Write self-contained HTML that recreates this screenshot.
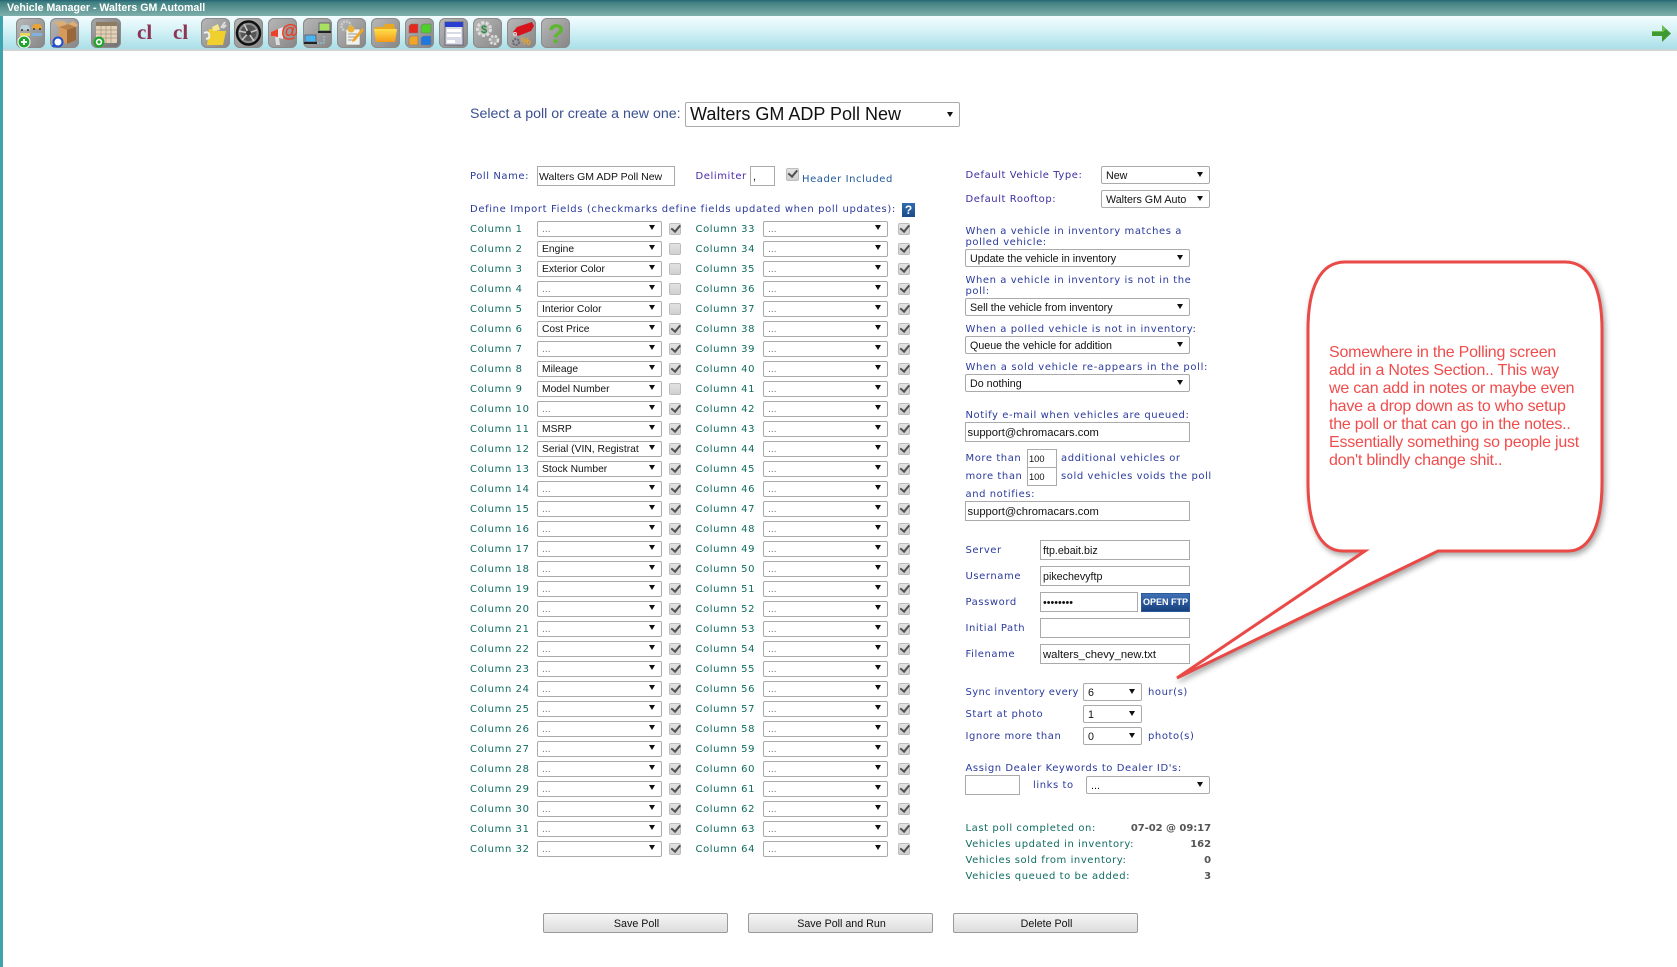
<!DOCTYPE html>
<html lang="en"><head><meta charset="utf-8"><title>Vehicle Manager - Walters GM Automall</title>
<style>
*{box-sizing:border-box}
html,body{margin:0;padding:0}
body{width:1677px;height:967px;position:relative;overflow:hidden;background:#fff;font-family:"Liberation Sans",sans-serif}
#edge{position:absolute;left:0;top:16px;width:3px;height:951px;background:#3fa3ad}
#title{position:absolute;left:0;top:0;width:1677px;height:16px;background:linear-gradient(#2a6a78 0,#2a6a78 1px,#3f7f7f 2px,#7fb0ac 100%)}
#title span{position:absolute;left:7px;top:2px;font:bold 10.6px/13px "Liberation Sans",sans-serif;letter-spacing:0;color:#fff}
#bar{position:absolute;left:3px;top:16px;width:1674px;height:35px;background:linear-gradient(#f4fdff,#d8f3f7 40%,#a9dfe8);border-bottom:2px solid #cfd4d6}
.ic{position:absolute;top:18px;width:29px;height:30px;border-radius:6px;background:linear-gradient(135deg,#b8b8b8,#858585);box-shadow:inset 0 0 0 1px #8b8b8b}
.cl{position:absolute;top:19px;font:bold 21px/26px "Liberation Serif",serif;color:#8b3454}
.l{position:absolute;white-space:nowrap;font:10px/12px "DejaVu Sans",sans-serif;letter-spacing:.57px;color:#2a3a9c;margin-top:1px}
.g{color:#116b60}
.v{position:absolute;white-space:nowrap;font:bold 10px/12px "DejaVu Sans",sans-serif;letter-spacing:-.05px;color:#555;text-align:right;right:466px;margin-top:1px}
.s{position:absolute;display:block;height:18px;border:1px solid #aaa;border-radius:2px;background:#fff;font:10.7px/18px "Liberation Sans",sans-serif;color:#111;padding-left:4px;overflow:hidden;white-space:nowrap}
.s::after{content:"";position:absolute;right:6px;top:5px;border-left:3.5px solid transparent;border-right:3.5px solid transparent;border-top:5.5px solid #111}
.s.big::after{top:8.5px}
.s em{font-style:normal;display:block;overflow:hidden}
.t{position:absolute;display:block;height:20px;border:1px solid #aaa;background:#fff;font:10.7px/18px "Liberation Sans",sans-serif;color:#111;padding:2px 0 0 2px;white-space:nowrap;overflow:hidden}
.r{position:absolute;left:0;width:1000px;height:16px}
.r b{position:absolute;left:470px;top:3px;font:10px/12px "DejaVu Sans",sans-serif;letter-spacing:.6px;color:#116b60;white-space:nowrap}
.r b.n{left:695.5px}
.r i{position:absolute;left:537px;top:0;width:125px;height:16px;border:1px solid #aaa;border-radius:2px;font:10.3px/15px "Liberation Sans",sans-serif;color:#111;padding-left:4px;overflow:hidden;white-space:nowrap}
.r i.n{left:763px}
.r i::after{content:"";position:absolute;right:6px;top:3px;border-left:3.5px solid transparent;border-right:3.5px solid transparent;border-top:5.5px solid #111;background:none}
.r i.d{color:#777}
.r u{position:absolute;left:669px;top:1.5px;width:12px;height:12px;border:1px solid #bdbdbd;border-radius:2px;background:linear-gradient(#e2e2e2,#d0d0d0);text-decoration:none}
.r u.n{left:898px}
.r u::after,.ck::after{content:"";position:absolute;left:3px;top:-1px;width:3.5px;height:6.5px;border-right:2px solid #505050;border-bottom:2px solid #505050;transform:rotate(40deg)}
.r u.e::after{display:none}
.ck{position:absolute;left:786px;top:168px;width:13px;height:13px;border:1px solid #bdbdbd;border-radius:2px;background:linear-gradient(#e2e2e2,#d0d0d0)}
.btn{position:absolute;top:913px;width:185px;height:20px;border:1px solid #9a9a9a;border-radius:2px;background:linear-gradient(#f6f6f6,#dcdcdc);font:10.7px/20px "Liberation Sans",sans-serif;color:#111;text-align:center;padding-left:2px}
#ftp{position:absolute;left:1141px;top:593px;width:49px;height:19px;background:linear-gradient(#3f6fb5,#17407f);border:1px solid #2a5a9a;color:#fff;font:bold 9px/17px "Liberation Sans",sans-serif;letter-spacing:0;text-align:center;white-space:nowrap;overflow:hidden}
#help{position:absolute;left:902px;top:203px;width:13px;height:14px;background:linear-gradient(#2f6bb0,#1c4b88);color:#fff;font:bold 12px/14px "Liberation Sans",sans-serif;text-align:center}
#callout{position:absolute;left:0;top:0;width:1677px;height:967px;pointer-events:none}
#note{position:absolute;left:1329px;top:344px;font:16px/18px "Liberation Sans",sans-serif;color:#f04c4c;letter-spacing:-.22px;white-space:nowrap}
</style></head><body>
<div id="edge"></div>
<div id="title"><span>Vehicle Manager - Walters GM Automall</span></div>
<div id="bar"></div>

<svg class="ic" style="left:16px" viewBox="0 0 29 30"><g stroke="none"><path d="M4 10l2-3h6l2 3v2H4z" fill="#bcd3dc"/><path d="M16 9l2-3h6l2 3v2H16z" fill="#e8a33a"/><rect x="4" y="15" width="10" height="3" fill="#e8d65a"/><rect x="16" y="15" width="10" height="3" fill="#7fb2de"/><circle cx="6" cy="12" r="1" fill="#333"/><circle cx="12" cy="12" r="1" fill="#333"/><circle cx="18" cy="11" r="1" fill="#333"/><circle cx="24" cy="11" r="1" fill="#333"/><circle cx="8" cy="24" r="6" fill="#1ea52c" stroke="#fff"/><path d="M5 24h6M8 21v6" stroke="#fff" stroke-width="2"/></g></svg>
<svg class="ic" style="left:49.5px" viewBox="0 0 29 30"><path d="M9 9l9-3 8 3v13l-9 4-8-4z" fill="#b8804a"/><path d="M9 9l8 3v14l-8-4z" fill="#d59a5c"/><path d="M17 12l9-3v13l-9 4z" fill="#9a673a"/><path d="M9 9L4 4l9-1 5 3zM18 6l5-3 5 4-2 2z" fill="#dcae74"/><circle cx="8" cy="24" r="4.5" fill="#fff" stroke="#1c4fd0" stroke-width="2"/><path d="M5 27l-3 2" stroke="#1c4fd0" stroke-width="2.5"/></svg>
<svg class="ic" style="left:91px;width:30px;background:linear-gradient(135deg,#a8a8a8,#6e6e6e)" viewBox="0 0 30 30"><rect x="5" y="4" width="21" height="21" rx="1" fill="#e2d2b8"/><rect x="5" y="4" width="21" height="4" fill="#8f7a62"/><path d="M5 12h21M5 16h21M5 20h21M10 8v17M15 8v17M20 8v17" stroke="#a8957c" stroke-width=".7"/><circle cx="8" cy="24" r="5.5" fill="#22a52e"/><circle cx="8" cy="24" r="2.4" fill="none" stroke="#fff" stroke-width="1.6"/></svg>
<span class="cl" style="left:137px">cl</span>
<span class="cl" style="left:173px">cl</span>
<svg class="ic" style="left:201px" viewBox="0 0 29 30"><path d="M8 11h6l2 2h9l-3 14H6z" fill="#f0d02c"/><path d="M11 9l6-3 2 6-7 1z" fill="#f6e88a"/><path d="M20 10l4-6M22 10l3-3" stroke="#ddd" stroke-width="2"/><path d="M3 15c4-2 6 0 5 5l-3 1" fill="none" stroke="#eee" stroke-width="2"/></svg>
<svg class="ic" style="left:234px" viewBox="0 0 29 30"><circle cx="14.5" cy="15" r="11.5" fill="#8a8a8a" stroke="#111" stroke-width="2.500"/><circle cx="14.5" cy="15" r="8" fill="#555"/><path d="M14.5 15L10 6M14.5 15L23 12M14.5 15L20 23M14.5 15L8 22M14.5 15L5 13" stroke="#c8c8c8" stroke-width="1.6"/><circle cx="14.5" cy="15" r="2.5" fill="#333"/></svg>
<svg class="ic" style="left:268px" viewBox="0 0 29 30"><path d="M3 14l12-5v12L3 18z" fill="#e8e8e8"/><path d="M3 14l7-3v8l-7-1z" fill="#e8412c"/><path d="M7 19l4 1 1 7H8z" fill="#ddd"/><text x="13" y="19" font-family="Liberation Sans,sans-serif" font-size="18" font-weight="bold" fill="#ee3a22">@</text></svg>
<svg class="ic" style="left:303px" viewBox="0 0 29 30"><rect x="16" y="5" width="11" height="8" fill="#a8e060" stroke="#667"/><rect x="15" y="13" width="13" height="2" fill="#222"/><rect x="2" y="17" width="11" height="7" fill="#4ab4f0" stroke="#667"/><rect x="1" y="24" width="13" height="2" fill="#222"/><path d="M14 25h7v-8" fill="none" stroke="#8fd0ef" stroke-width="1" stroke-dasharray="2 1"/></svg>
<svg class="ic" style="left:337px" viewBox="0 0 29 30"><circle cx="9" cy="8" r="4.5" fill="none" stroke="#ccc" stroke-width="2.5" stroke-dasharray="2 1"/><rect x="9" y="11" width="14" height="16" fill="#f2f2ec" stroke="#888" stroke-width=".6"/><path d="M11 16h9M11 19h9M11 22h7" stroke="#999"/><circle cx="14" cy="11" r="3.5" fill="#e8b23a"/><path d="M16 21l9-11 2 2-9 11-3 1z" fill="#f0a428"/></svg>
<svg class="ic" style="left:371px" viewBox="0 0 29 30"><defs><linearGradient id="fd" x1="0" y1="0" x2="0" y2="1"><stop offset="0" stop-color="#ffe04a"/><stop offset="1" stop-color="#f59a18"/></linearGradient></defs><path d="M4 9h8l2-3h9l1 5H4z" fill="#e8a824"/><path d="M3 11h23l-2 13H5z" fill="url(#fd)"/></svg>
<svg class="ic" style="left:405px" viewBox="0 0 29 30"><g stroke="#777" stroke-width=".6"><path d="M4 8l2-2h7v9H4z" fill="#e6281e"/><path d="M16 8l2-2h8v9H16z" fill="#4ecf2a"/><path d="M4 20l2-2h7v9H4z" fill="#f0a428"/><path d="M16 20l2-2h8v9H16z" fill="#1e78e0"/></g></svg>
<svg class="ic" style="left:439px" viewBox="0 0 29 30"><rect x="6" y="4" width="18" height="23" fill="#d8dbe6" stroke="#667"/><rect x="6" y="4" width="18" height="5" fill="#2a3fd0"/><rect x="8" y="11" width="14" height="3" fill="#fff"/><rect x="8" y="16" width="14" height="3" fill="#fff"/><rect x="8" y="22" width="8" height="3" fill="#fff"/></svg>
<svg class="ic" style="left:473px" viewBox="0 0 29 30"><circle cx="11" cy="11" r="6.5" fill="#bbb" stroke="#ddd" stroke-width="3" stroke-dasharray="3 1.6"/><text x="8" y="15" font-family="Liberation Sans,sans-serif" font-size="11" font-weight="bold" fill="#2a8a3a">$</text><circle cx="21" cy="22" r="4" fill="#aaa" stroke="#ddd" stroke-width="2.5" stroke-dasharray="2.5 1.4"/></svg>
<svg class="ic" style="left:507px" viewBox="0 0 29 30"><path d="M6 14l4-5 15-5 2 4-3 5-13 5z" fill="#d6141e"/><circle cx="8" cy="16" r="1.5" fill="none" stroke="#ddd"/><text x="14" y="27" font-family="Liberation Sans,sans-serif" font-size="11" font-weight="bold" fill="#f0a428">%</text><circle cx="9" cy="24" r="3" fill="none" stroke="#667" stroke-width="2" stroke-dasharray="2 1"/></svg>
<svg class="ic" style="left:541px" viewBox="0 0 29 30"><text x="7" y="25" font-family="Liberation Sans,sans-serif" font-size="27" font-weight="bold" fill="#5cb82a">?</text></svg>
<svg style="position:absolute;left:1651px;top:24px" width="21" height="19" viewBox="0 0 21 19"><path d="M1 7h10V1l9 8.500-9 8.500v-6H1z" fill="#3f9a32"/><path d="M1 7h10V1l4 4-3 3H1z" fill="#6cc052"/></svg>

<span class="l" style="left:470px;top:104px;font:14.2px/18px 'Liberation Sans',sans-serif;letter-spacing:0;color:#3a5090">Select a poll or create a new one:</span>
<span class="s big" style="left:685px;top:102px;width:275px;height:25px;font:18px/22px 'Liberation Sans',sans-serif;padding-left:4px">Walters GM ADP Poll New</span>

<span class="l" style="left:470px;top:169.500px">Poll Name:</span>
<input class="t" style="left:537px;top:166px;width:138px;font-size:10.5px;padding-left:1px" value="Walters GM ADP Poll New">
<span class="l" style="left:695.500px;top:169.500px;color:#4a2ab0">Delimiter</span>
<input class="t" style="left:750px;top:166px;width:25px" value=",">
<span class="ck"></span>
<span class="l" style="left:802px;top:172.500px;color:#1f5a9c">Header Included</span>
<span class="l" style="left:470px;top:202.500px;letter-spacing:.63px">Define Import Fields (checkmarks define fields updated when poll updates):</span>
<div id="help">?</div>

<div class="r" style="top:221px"><b>Column 1</b><i class="d">...</i><u></u><b class="n">Column 33</b><i class="n d">...</i><u class="n"></u></div>
<div class="r" style="top:241px"><b>Column 2</b><i>Engine</i><u class="e"></u><b class="n">Column 34</b><i class="n d">...</i><u class="n"></u></div>
<div class="r" style="top:261px"><b>Column 3</b><i>Exterior Color</i><u class="e"></u><b class="n">Column 35</b><i class="n d">...</i><u class="n"></u></div>
<div class="r" style="top:281px"><b>Column 4</b><i class="d">...</i><u class="e"></u><b class="n">Column 36</b><i class="n d">...</i><u class="n"></u></div>
<div class="r" style="top:301px"><b>Column 5</b><i>Interior Color</i><u class="e"></u><b class="n">Column 37</b><i class="n d">...</i><u class="n"></u></div>
<div class="r" style="top:321px"><b>Column 6</b><i>Cost Price</i><u></u><b class="n">Column 38</b><i class="n d">...</i><u class="n"></u></div>
<div class="r" style="top:341px"><b>Column 7</b><i class="d">...</i><u></u><b class="n">Column 39</b><i class="n d">...</i><u class="n"></u></div>
<div class="r" style="top:361px"><b>Column 8</b><i>Mileage</i><u></u><b class="n">Column 40</b><i class="n d">...</i><u class="n"></u></div>
<div class="r" style="top:381px"><b>Column 9</b><i>Model Number</i><u class="e"></u><b class="n">Column 41</b><i class="n d">...</i><u class="n"></u></div>
<div class="r" style="top:401px"><b>Column 10</b><i class="d">...</i><u></u><b class="n">Column 42</b><i class="n d">...</i><u class="n"></u></div>
<div class="r" style="top:421px"><b>Column 11</b><i>MSRP</i><u></u><b class="n">Column 43</b><i class="n d">...</i><u class="n"></u></div>
<div class="r" style="top:441px"><b>Column 12</b><i>Serial (VIN, Registrat</i><u></u><b class="n">Column 44</b><i class="n d">...</i><u class="n"></u></div>
<div class="r" style="top:461px"><b>Column 13</b><i>Stock Number</i><u></u><b class="n">Column 45</b><i class="n d">...</i><u class="n"></u></div>
<div class="r" style="top:481px"><b>Column 14</b><i class="d">...</i><u></u><b class="n">Column 46</b><i class="n d">...</i><u class="n"></u></div>
<div class="r" style="top:501px"><b>Column 15</b><i class="d">...</i><u></u><b class="n">Column 47</b><i class="n d">...</i><u class="n"></u></div>
<div class="r" style="top:521px"><b>Column 16</b><i class="d">...</i><u></u><b class="n">Column 48</b><i class="n d">...</i><u class="n"></u></div>
<div class="r" style="top:541px"><b>Column 17</b><i class="d">...</i><u></u><b class="n">Column 49</b><i class="n d">...</i><u class="n"></u></div>
<div class="r" style="top:561px"><b>Column 18</b><i class="d">...</i><u></u><b class="n">Column 50</b><i class="n d">...</i><u class="n"></u></div>
<div class="r" style="top:581px"><b>Column 19</b><i class="d">...</i><u></u><b class="n">Column 51</b><i class="n d">...</i><u class="n"></u></div>
<div class="r" style="top:601px"><b>Column 20</b><i class="d">...</i><u></u><b class="n">Column 52</b><i class="n d">...</i><u class="n"></u></div>
<div class="r" style="top:621px"><b>Column 21</b><i class="d">...</i><u></u><b class="n">Column 53</b><i class="n d">...</i><u class="n"></u></div>
<div class="r" style="top:641px"><b>Column 22</b><i class="d">...</i><u></u><b class="n">Column 54</b><i class="n d">...</i><u class="n"></u></div>
<div class="r" style="top:661px"><b>Column 23</b><i class="d">...</i><u></u><b class="n">Column 55</b><i class="n d">...</i><u class="n"></u></div>
<div class="r" style="top:681px"><b>Column 24</b><i class="d">...</i><u></u><b class="n">Column 56</b><i class="n d">...</i><u class="n"></u></div>
<div class="r" style="top:701px"><b>Column 25</b><i class="d">...</i><u></u><b class="n">Column 57</b><i class="n d">...</i><u class="n"></u></div>
<div class="r" style="top:721px"><b>Column 26</b><i class="d">...</i><u></u><b class="n">Column 58</b><i class="n d">...</i><u class="n"></u></div>
<div class="r" style="top:741px"><b>Column 27</b><i class="d">...</i><u></u><b class="n">Column 59</b><i class="n d">...</i><u class="n"></u></div>
<div class="r" style="top:761px"><b>Column 28</b><i class="d">...</i><u></u><b class="n">Column 60</b><i class="n d">...</i><u class="n"></u></div>
<div class="r" style="top:781px"><b>Column 29</b><i class="d">...</i><u></u><b class="n">Column 61</b><i class="n d">...</i><u class="n"></u></div>
<div class="r" style="top:801px"><b>Column 30</b><i class="d">...</i><u></u><b class="n">Column 62</b><i class="n d">...</i><u class="n"></u></div>
<div class="r" style="top:821px"><b>Column 31</b><i class="d">...</i><u></u><b class="n">Column 63</b><i class="n d">...</i><u class="n"></u></div>
<div class="r" style="top:841px"><b>Column 32</b><i class="d">...</i><u></u><b class="n">Column 64</b><i class="n d">...</i><u class="n"></u></div>

<span class="l" style="left:965.500px;top:169px;color:#3a2ea0">Default Vehicle Type:</span>
<span class="s" style="left:1101px;top:166px;width:109px">New</span>
<span class="l" style="left:965.500px;top:193px;color:#3a2ea0">Default Rooftop:</span>
<span class="s" style="left:1101px;top:190px;width:109px"><em style="width:80px">Walters GM Automall</em></span>
<span class="l" style="left:965.500px;top:224.500px">When a vehicle in inventory matches a</span>
<span class="l" style="left:965.500px;top:235.500px">polled vehicle:</span>
<span class="s" style="left:965px;top:249px;width:224.500px">Update the vehicle in inventory</span>
<span class="l" style="left:965.500px;top:273.500px">When a vehicle in inventory is not in the</span>
<span class="l" style="left:965.500px;top:285px">poll:</span>
<span class="s" style="left:965px;top:298px;width:224.500px">Sell the vehicle from inventory</span>
<span class="l" style="left:965.500px;top:322.500px">When a polled vehicle is not in inventory:</span>
<span class="s" style="left:965px;top:336px;width:224.500px">Queue the vehicle for addition</span>
<span class="l" style="left:965.500px;top:360.500px;letter-spacing:.66px">When a sold vehicle re-appears in the poll:</span>
<span class="s" style="left:965px;top:374px;width:224.500px">Do nothing</span>
<span class="l" style="left:965.500px;top:408.500px">Notify e-mail when vehicles are queued:</span>
<input class="t" style="left:965px;top:422px;width:224.500px;font-size:11.2px;padding-left:1.5px" value="support@chromacars.com">
<span class="l" style="left:965.500px;top:451.500px">More than</span>
<input class="t" style="left:1027px;top:449px;width:30px;height:19px;font-size:9.300px;padding:0 0 0 1px" value="100">
<span class="l" style="left:1061px;top:451.500px">additional vehicles or</span>
<span class="l" style="left:965.500px;top:469.500px">more than</span>
<input class="t" style="left:1027px;top:467px;width:30px;height:19px;font-size:9.300px;padding:0 0 0 1px" value="100">
<span class="l" style="left:1061px;top:469.500px">sold vehicles voids the poll</span>
<span class="l" style="left:965.500px;top:487.500px">and notifies:</span>
<input class="t" style="left:965px;top:501px;width:224.500px;font-size:11.2px;padding-left:1.5px" value="support@chromacars.com">

<span class="l" style="left:965.500px;top:543.500px">Server</span>
<input class="t" style="left:1040px;top:540px;width:150px" value="ftp.ebait.biz">
<span class="l" style="left:965.500px;top:569.500px">Username</span>
<input class="t" style="left:1040px;top:566px;width:150px" value="pikechevyftp">
<span class="l" style="left:965.500px;top:595.500px">Password</span>
<input class="t" style="left:1040px;top:592px;width:98px" value="••••••••">
<div id="ftp">OPEN FTP</div>
<span class="l" style="left:965.500px;top:621.500px">Initial Path</span>
<input class="t" style="left:1040px;top:618px;width:150px" value="">
<span class="l" style="left:965.500px;top:647.500px">Filename</span>
<input class="t" style="left:1040px;top:644px;width:150px;font-size:11.3px" value="walters_chevy_new.txt">

<span class="l" style="left:965.500px;top:685.500px;letter-spacing:.35px">Sync inventory every</span>
<span class="s" style="left:1083px;top:683px;width:59px">6</span>
<span class="l" style="left:1148px;top:685.500px">hour(s)</span>
<span class="l" style="left:965.500px;top:707.500px">Start at photo</span>
<span class="s" style="left:1083px;top:705px;width:59px">1</span>
<span class="l" style="left:965.500px;top:729.500px">Ignore more than</span>
<span class="s" style="left:1083px;top:727px;width:59px">0</span>
<span class="l" style="left:1148px;top:729.500px">photo(s)</span>
<span class="l" style="left:965.500px;top:761.500px">Assign Dealer Keywords to Dealer ID's:</span>
<input class="t" style="left:965px;top:775px;width:55px" value="">
<span class="l" style="left:1033px;top:778.500px">links to</span>
<span class="s" style="left:1086px;top:776px;width:124px">...</span>

<span class="l g" style="left:965.500px;top:821.500px">Last poll completed on:</span><span class="v" style="top:821.500px">07-02 @ 09:17</span>
<span class="l g" style="left:965.500px;top:837.500px">Vehicles updated in inventory:</span><span class="v" style="top:837.500px">162</span>
<span class="l g" style="left:965.500px;top:853.500px">Vehicles sold from inventory:</span><span class="v" style="top:853.500px">0</span>
<span class="l g" style="left:965.500px;top:869.500px">Vehicles queued to be added:</span><span class="v" style="top:869.500px">3</span>

<div class="btn" style="left:543px">Save Poll</div>
<div class="btn" style="left:748px">Save Poll and Run</div>
<div class="btn" style="left:953px">Delete Poll</div>

<svg id="callout" viewBox="0 0 1677 967"><path d="M1365 551L1177 678L1438 551H1568C1590 551 1602 525 1602 483V330C1602 288 1590 262 1565 262H1345C1320 262 1308 288 1308 330V483C1308 525 1320 551 1343 551Z" fill="#fff" stroke="#e94a47" stroke-width="3" style="filter:drop-shadow(2px 3px 3px rgba(0,0,0,.35))"/></svg>
<div id="note">Somewhere in the Polling screen<br>add in a Notes Section.. This way<br>we can add in notes or maybe even<br>have a drop down as to who setup<br>the poll or that can go in the notes..<br>Essentially something so people just<br>don't blindly change shit..</div>
</body></html>
